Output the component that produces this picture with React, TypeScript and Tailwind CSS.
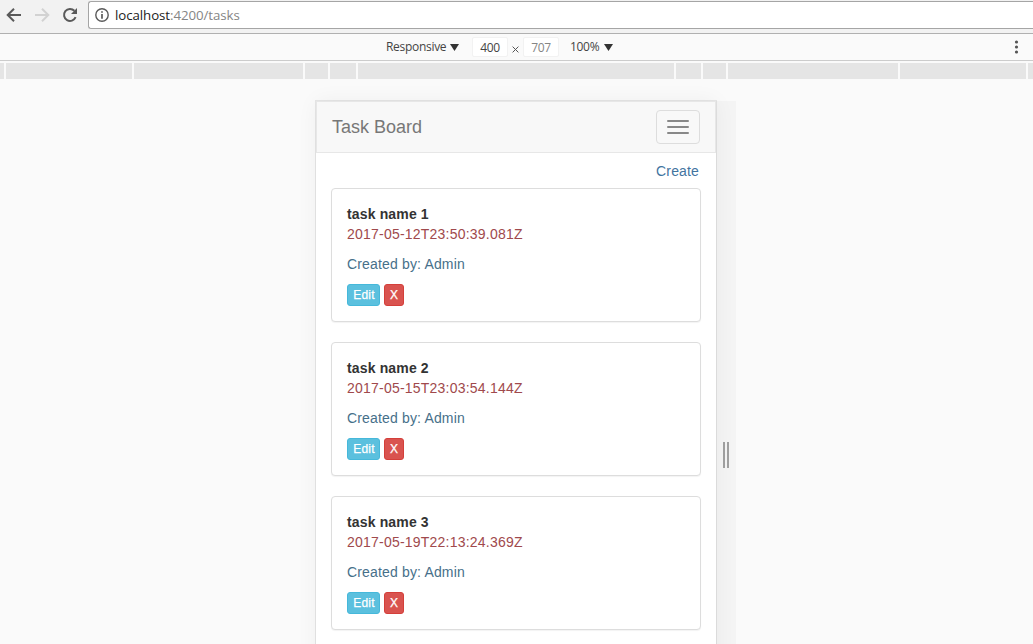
import React from 'react';

const tasks = [
  { name: 'task name 1', date: '2017-05-12T23:50:39.081Z', author: 'Admin' },
  { name: 'task name 2', date: '2017-05-15T23:03:54.144Z', author: 'Admin' },
  { name: 'task name 3', date: '2017-05-19T22:13:24.369Z', author: 'Admin' },
];

const breakpoints = [4, 126, 169, 23, 26, 316, 25, 23, 170, 126, 5];

function AddressBar() {
  return (
    <div className="flex h-[34px] shrink-0 items-start border-b border-[#b0b0b0] bg-[#f2f2f2]">
      <svg className="mt-[5px] ml-1 h-5 w-5 shrink-0" viewBox="0 0 20 20" fill="none" stroke="#5a5a5a" strokeWidth="2">
        <path d="M17 10H4.2M10 3.7L3.7 10L10 16.3" />
      </svg>
      <svg className="mt-[5px] ml-2 h-5 w-5 shrink-0" viewBox="0 0 20 20" fill="none" stroke="#d2d2d2" strokeWidth="2">
        <path d="M3 10H15.8M10 3.7L16.3 10L10 16.3" />
      </svg>
      <svg className="mt-[5px] ml-2 h-5 w-5 shrink-0" viewBox="0 0 20 20" fill="none">
        <path d="M15.6 12.2A6 6 0 1 1 14.4 5.8" stroke="#5a5a5a" strokeWidth="2" />
        <path d="M17 3V9H11Z" fill="#5a5a5a" />
      </svg>
      <div className="mt-px ml-2 flex h-7 min-w-0 flex-1 items-center rounded-l-[3px] border border-r-0 border-[#a5a5a5] bg-white">
        <svg className="ml-1.5 h-[14px] w-[14px] shrink-0" viewBox="0 0 14 14" fill="none">
          <circle cx="7" cy="7" r="6.2" stroke="#5a5a5a" strokeWidth="1.4" />
          <path d="M7 3.2V4.8M7 6V10.8" stroke="#5a5a5a" strokeWidth="1.7" />
        </svg>
        <span className="ml-[6px] font-['Open_Sans',sans-serif] text-[13.3px] leading-[18px] tracking-[-0.08px] text-[#858585]">
          <span className="text-[#222]">localhost</span>:4200/tasks
        </span>
      </div>
    </div>
  );
}

function Caret() {
  return (
    <svg className="h-[7px] w-[9px] shrink-0" viewBox="0 0 9 7">
      <path d="M0 0H9L4.5 7Z" fill="#333" />
    </svg>
  );
}

function DeviceToolbar() {
  return (
    <div className="flex h-[27px] shrink-0 items-center border-b border-[#ccc] bg-[#fafafa] font-['Open_Sans',sans-serif] text-[12px] leading-[20px] tracking-[-0.3px] text-[#444]">
      <span className="ml-[386px] w-[64px] whitespace-nowrap">Responsive</span>
      <Caret />
      <span className="ml-[13px] h-[20px] w-[36px] rounded-[2px] border border-[#f2f2f2] bg-white text-center">400</span>
      <svg className="mt-1 ml-1 h-[7px] w-[7px]" viewBox="0 0 7 7">
        <path d="M.6 .6L6.4 6.4M6.4 .6L.6 6.4" stroke="#555" />
      </svg>
      <span className="ml-1 h-[20px] w-[36px] rounded-[2px] border border-[#f2f2f2] bg-white text-center text-[#858585]">707</span>
      <span className="ml-[11px] w-[34px] whitespace-nowrap">100%</span>
      <Caret />
      <svg className="mr-[14px] ml-auto h-[14px] w-[5px]" viewBox="0 0 5 14" fill="#555">
        <circle cx="2.5" cy="2" r="1.6" />
        <circle cx="2.5" cy="7" r="1.6" />
        <circle cx="2.5" cy="12" r="1.6" />
      </svg>
    </div>
  );
}

function BreakpointBar() {
  return (
    <div className="mt-0.5 flex h-4 shrink-0 gap-0.5">
      {breakpoints.map((width, i) => (
        <div key={i} className="shrink-0 bg-[#e5e5e5]" style={{ width }} />
      ))}
    </div>
  );
}

function TaskCard({ task }: { task: (typeof tasks)[number] }) {
  return (
    <div className="mb-5 h-[134px] rounded border border-[#ddd] bg-white p-[15px] text-[14px] leading-5 shadow-[0_1px_1px_rgba(0,0,0,0.05)]">
      <div className="font-bold tracking-[0.15px] text-[#333]">{task.name}</div>
      <div className="tracking-[0.22px] text-[#a0494c]">{task.date}</div>
      <div className="mt-2.5 tracking-[0.16px] text-[#46708a]">Created by: {task.author}</div>
      <div className="mt-2.5 flex gap-1 text-[12px] leading-[18px] text-white">
        <button className="h-[22px] w-[33px] rounded-[3px] border border-[#46b8da] bg-[#5bc0de] pl-px tracking-[0.2px] [-webkit-text-stroke:0.25px_white]">Edit</button>
        <button className="h-[22px] w-5 rounded-[3px] border border-[#d43f3a] bg-[#d9534f] [-webkit-text-stroke:0.25px_white]">X</button>
      </div>
    </div>
  );
}

export default function App() {
  return (
    <div className="flex h-[644px] w-[1033px] flex-col overflow-hidden bg-[#fafafa]">
      <AddressBar />
      <DeviceToolbar />
      <BreakpointBar />
      <div className="flex min-h-0 flex-1 overflow-hidden pt-[22px] pl-[316px]">
        <div className="z-10 h-[707px] w-[400px] shrink-0 bg-white font-['Liberation_Sans',sans-serif] shadow-[0_0_0_1px_rgba(0,0,0,0.08),0_0_20px_rgba(0,0,0,0.05)]">
          <nav className="flex h-[52px] items-center justify-between border border-[#e7e7e7] bg-[#f8f8f8] px-[15px]">
            <span className="text-[18px] leading-5 text-[#777]">Task Board</span>
            <button className="flex h-[34px] w-11 flex-col items-center justify-center gap-1 rounded border border-[#ddd]">
              <span className="h-0.5 w-[22px] rounded-[1px] bg-[#888]" />
              <span className="h-0.5 w-[22px] rounded-[1px] bg-[#888]" />
              <span className="h-0.5 w-[22px] rounded-[1px] bg-[#888]" />
            </button>
          </nav>
          <div className="px-[15px] pt-2">
            <div className="mb-[7px] pr-0.5 text-right text-[14px] leading-5 tracking-[0.15px] text-[#42749f]">Create</div>
            {tasks.map((task) => (
              <TaskCard key={task.name} task={task} />
            ))}
          </div>
        </div>
        <div className="flex h-[707px] w-5 shrink-0 justify-center gap-0.5 bg-[#f4f4f4] pt-[341px]">
          <div className="h-[26px] w-0.5 bg-[#a0a0a0]" />
          <div className="h-[26px] w-0.5 bg-[#a0a0a0]" />
        </div>
      </div>
    </div>
  );
}
